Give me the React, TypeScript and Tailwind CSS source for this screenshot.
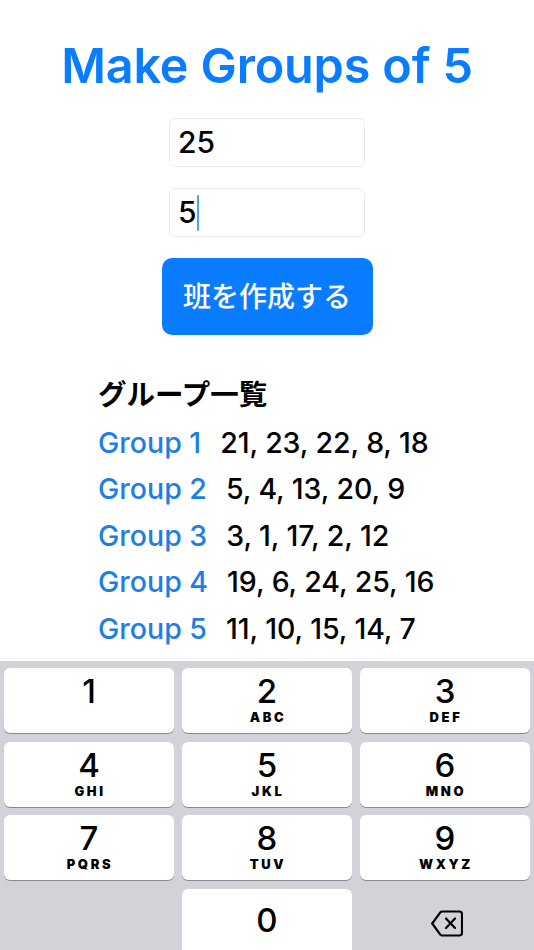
const groups = [
  { name: "Group 1", members: "21, 23, 22, 8, 18" },
  { name: "Group 2", members: "5, 4, 13, 20, 9" },
  { name: "Group 3", members: "3, 1, 17, 2, 12" },
  { name: "Group 4", members: "19, 6, 24, 25, 16" },
  { name: "Group 5", members: "11, 10, 15, 14, 7" },
];

const keys = [
  { digit: "1", letters: "" },
  { digit: "2", letters: "ABC" },
  { digit: "3", letters: "DEF" },
  { digit: "4", letters: "GHI" },
  { digit: "5", letters: "JKL" },
  { digit: "6", letters: "MNO" },
  { digit: "7", letters: "PQRS" },
  { digit: "8", letters: "TUV" },
  { digit: "9", letters: "WXYZ" },
];

const Key = ({ digit, letters }: { digit: string; letters: string }) => (
  <div className="h-[65px] bg-white rounded-[6px] shadow-[0_1px_0_#8a8b8f] flex flex-col items-center">
    <span className="text-[33px] leading-[38px] mt-[4px] font-medium text-black">{digit}</span>
    <span className="text-[13px] leading-[14px] font-black tracking-[2.6px] pl-[2px] text-black">{letters}</span>
  </div>
);

export default function App() {
  return (
    <div className="w-[534px] h-[950px] overflow-hidden bg-white flex flex-col font-['Inter','Noto_Sans_CJK_JP',sans-serif]">
      <div className="flex-1 flex flex-col items-center">
        <h1 className="mt-[37px] text-[48.5px] leading-[58px] font-semibold text-[#0a7cff] tracking-[-0.15px]">
          Make Groups of 5
        </h1>

        <div className="mt-[23px] w-[196px] h-[49px] border border-[#ececec] rounded-[6px] pl-[8px] flex items-center text-[30px] font-medium text-black">
          25
        </div>
        <div className="mt-[21px] w-[196px] h-[49px] border border-[#ececec] rounded-[6px] pl-[8px] flex items-center text-[30px] font-medium text-black">
          5<span className="w-[2px] h-[36px] bg-[#4aa8e0] rounded-full" />
        </div>

        <button className="mt-[21px] w-[211px] h-[77px] bg-[#0a7cff] rounded-[10px] text-white text-[28px] font-medium">
          班を作成する
        </button>

        <div className="mt-[41px] w-full pl-[98px]">
          <h2 className="text-[28.500px] leading-[38px] font-bold text-black">グループ一覧</h2>
          <ul className="mt-[6px] flex flex-col">
            {groups.map((g) => (
              <li key={g.name} className="h-[46.5px] flex items-center text-[28.500px] font-medium">
                <span className="text-[#1c7ee6]">{g.name}</span>
                <span className="ml-[19px] text-black tracking-[-0.1px]">{g.members}</span>
              </li>
            ))}
          </ul>
        </div>
      </div>

      {/* number pad */}
      <div className="h-[289px] bg-[#d1d3d9] px-[4px] pt-[7px]">
        <div className="grid grid-cols-3 gap-x-[8px] gap-y-[8.5px]">
          {keys.map((k) => (
            <Key key={k.digit} digit={k.digit} letters={k.letters} />
          ))}
          <div />
          <div className="h-[70px] bg-white rounded-[6px] flex items-center justify-center pb-[5px] text-[33px] font-medium text-black">
            0
          </div>
          <div className="h-[70px] flex items-center justify-center pb-[1px] pl-[3px]">
            <svg width="32" height="27" viewBox="0 0 32 27" fill="none" stroke="#000" strokeWidth="2.200" strokeLinejoin="round" strokeLinecap="round">
              <path d="M11 1.500h17.500a2.500 2.500 0 0 1 2.500 2.500v19a2.500 2.500 0 0 1-2.500 2.500H11a2 2 0 0 1-1.500-.7L1.200 13.500 9.500 2.200A2 2 0 0 1 11 1.500z" />
              <path d="M15 8.500l9 9.500M24 8.500l-9 9.500" />
            </svg>
          </div>
        </div>
      </div>
    </div>
  );
}
